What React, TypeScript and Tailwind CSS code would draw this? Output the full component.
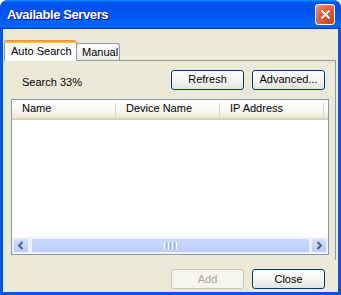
import React from 'react';

const XpButton = ({ label, disabled = false }: { label: string; disabled?: boolean }) => (
  <button
    className={
      disabled
        ? 'w-[73px] h-[20px] rounded-[3px] border border-[#c9c7ba] bg-[#f5f4ea] text-[#aca899] text-[11px] leading-none'
        : 'w-[73px] h-[20px] rounded-[3px] border border-[#003c74] bg-[linear-gradient(180deg,#ffffff,#f3f2ee_60%,#e3e2dc)] text-black text-[11px] leading-none'
    }
  >
    {label}
  </button>
);

const Chevron = ({ dir }: { dir: 'left' | 'right' }) => (
  <svg width="8" height="9" viewBox="0 0 8 9">
    <path
      d={dir === 'left' ? 'M5.5 1 L2 4.5 L5.5 8' : 'M2.5 1 L6 4.5 L2.5 8'}
      stroke="#4d6185"
      strokeWidth="2"
      fill="none"
    />
  </svg>
);

export default function App() {
  return (
    <div className="w-[341px] h-[295px] flex flex-col rounded-t-[8px] overflow-hidden bg-[#0553e1] font-['Liberation_Sans',Arial,sans-serif] text-[11px] text-black">
      {/* title bar */}
      <div className="h-[29px] shrink-0 flex items-center justify-between pl-[7px] pr-[6px] bg-[linear-gradient(180deg,#0997ff,#0053ee_8%,#0050ee_40%,#0066ff_88%,#0066ff_93%,#005bff_95%,#003dd7_96%,#003dd7)]">
        <span className="text-white font-bold text-[13px] tracking-[-0.4px] [text-shadow:1px_1px_#0f1089]">Available Servers</span>
        <button className="w-[20px] h-[21px] rounded-[3px] border border-white bg-[radial-gradient(circle_at_80%_80%,#cc4620,#e35c3d_55%,#f2a08a)] flex items-center justify-center">
          <svg width="11" height="11" viewBox="0 0 11 11">
            <path d="M1.5 1.5 L9.5 9.5 M9.5 1.5 L1.5 9.5" stroke="#fff" strokeWidth="2" />
          </svg>
        </button>
      </div>

      {/* client area */}
      <div className="flex-1 mx-[3px] mb-[3px] bg-[#ece9d8] flex flex-col pt-[11px] pl-[1px] pr-[2px]">
        {/* tabs */}
        <div className="h-[20px] flex items-end">
          <div className="relative z-10 w-[73px] h-[21px] -mb-px flex flex-col rounded-t-[3px] border-x border-[#919b9c] bg-[#fcfcfe] overflow-hidden">
            <div className="h-[3px] bg-[linear-gradient(180deg,#e68b2c,#ffc73c)]" />
            <div className="flex-1 pl-[6px] pt-[1px] leading-[14px]">Auto Search</div>
          </div>
          <div className="w-[44px] h-[17px] -ml-px rounded-t-[3px] border border-b-0 border-[#919b9c] bg-[linear-gradient(180deg,#ffffff,#ecebe6)] pl-[5px] pt-[2px] leading-[13px]">
            Manual
          </div>
        </div>

        {/* panel */}
        <div className="h-[200px] border-t border-r border-[#919b9c] flex flex-col">
          <div className="flex items-center justify-between pl-[18px] pr-[10px] pt-[8px]">
            <span className="mt-[5px]">Search 33%</span>
            <div className="flex gap-[8px]">
              <XpButton label="Refresh" />
              <XpButton label="Advanced..." />
            </div>
          </div>

          {/* list view */}
          <div className="mt-[8px] ml-[7px] mr-[6px] h-[156px] border border-[#7f9db9] bg-white flex flex-col">
            <div className="h-[20px] shrink-0 flex bg-[linear-gradient(180deg,#ffffff,#f6f5f0_60%,#ebeadb_85%,#e2decd_90%,#cbc7b8)]">
              <div className="w-[104px] flex items-center pl-[10px] pb-[2px] border-r border-[#d6d2c2] my-[3px]">Name</div>
              <div className="w-[104px] flex items-center pl-[10px] pb-[2px] border-r border-[#d6d2c2] my-[3px]">Device Name</div>
              <div className="w-[104px] flex items-center pl-[10px] pb-[2px] border-r border-[#d6d2c2] my-[3px]">IP Address</div>
            </div>
            <div className="flex-1" />
            {/* horizontal scrollbar */}
            <div className="h-[17px] shrink-0 flex items-stretch gap-[1px] bg-[#f3f1ec] px-[1px] py-[1px]">
              <div className="w-[16px] rounded-[2px] border border-[#eef2fd] bg-[linear-gradient(180deg,#d2defc,#b9cdfa)] flex items-center justify-center">
                <Chevron dir="left" />
              </div>
              <div className="flex-1 ml-[1px] rounded-[2px] border border-[#eef2fd] bg-[linear-gradient(180deg,#cad9fd,#bccffb)] flex items-center justify-center">
                <div className="flex gap-[1px]">
                  <div className="w-[1px] h-[7px] bg-white" />
                  <div className="w-[1px] h-[7px] bg-[#8cb0f8]" />
                  <div className="w-[1px] h-[7px] bg-white" />
                  <div className="w-[1px] h-[7px] bg-[#8cb0f8]" />
                  <div className="w-[1px] h-[7px] bg-white" />
                  <div className="w-[1px] h-[7px] bg-[#8cb0f8]" />
                  <div className="w-[1px] h-[7px] bg-white" />
                </div>
              </div>
              <div className="w-[16px] rounded-[2px] border border-[#eef2fd] bg-[linear-gradient(180deg,#d2defc,#b9cdfa)] flex items-center justify-center">
                <Chevron dir="right" />
              </div>
            </div>
          </div>
        </div>

        {/* footer */}
        <div className="flex justify-end gap-[8px] pr-[11px] pt-[9px]">
          <XpButton label="Add" disabled />
          <XpButton label="Close" />
        </div>
      </div>
    </div>
  );
}
